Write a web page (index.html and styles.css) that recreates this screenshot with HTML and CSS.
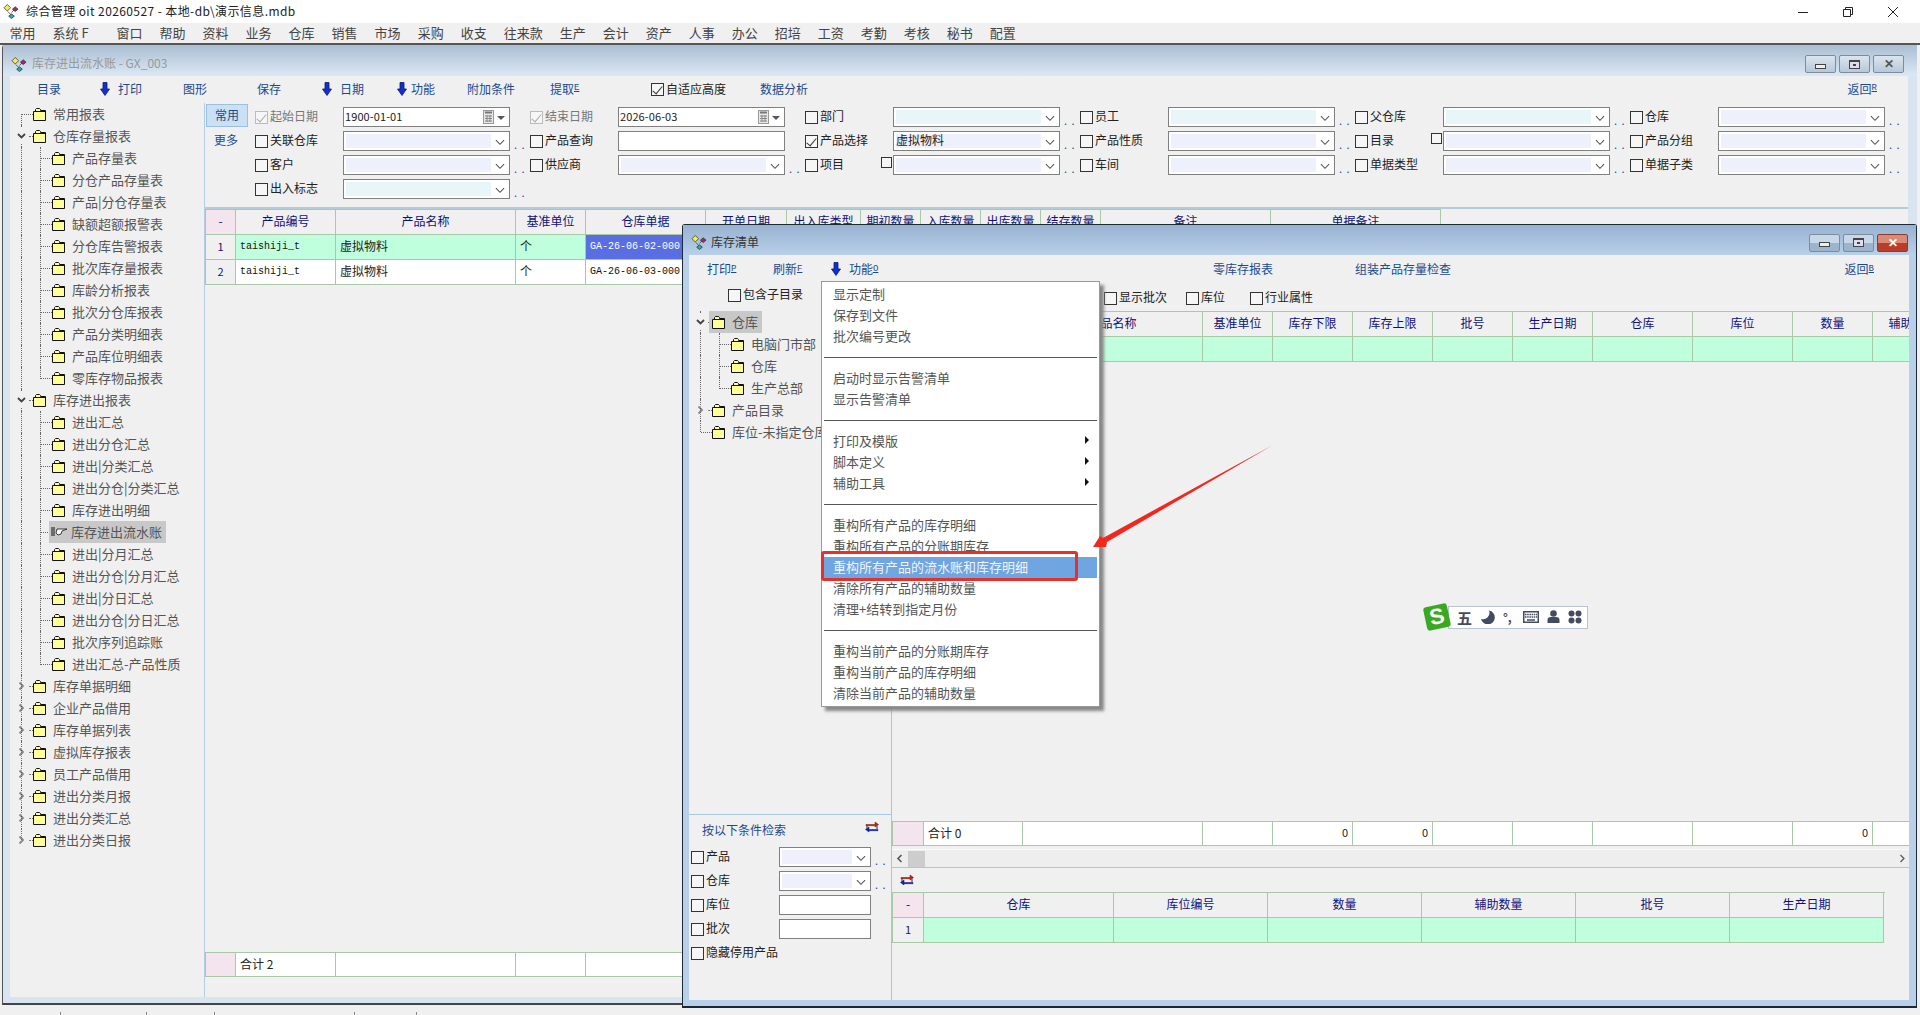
FILE: index.html
```html
<!DOCTYPE html>
<html lang="zh-CN">
<head>
    <meta charset="UTF-8">
    <title>综合管理 oit 20260527</title>
    <link rel="stylesheet" href="styles.css">
</head>
<body>
<svg class="defs" width="0" height="0">
    <symbol id="app" viewBox="0 0 18 16">
        <path d="M5 8L8 11V14M13 5L9 9" fill="none" stroke="#555" stroke-width="1"/>
        <path d="M4.500 0.500L8 4L4.500 7.500L1 4Z" fill="#f4ee50" stroke="#333" stroke-width="0.800"/>
        <path d="M13 3L16 5.500L13 8L10 5.500Z" fill="#a02a70" stroke="#333" stroke-width="0.800"/>
        <path d="M9 10.500L12 13L9 15.500L6 13Z" fill="#30a8a8" stroke="#333" stroke-width="0.800"/>
    </symbol>
    <symbol id="fd" viewBox="0 0 13 13">
        <path d="M0.500 3.500H2.500V1.500L3.500 0.500H6.500L7.500 1.500V2.500H12.500V12.500H0.500Z" fill="#ffff99" stroke="#111" stroke-width="1"/>
        <path d="M1 3.500H12" stroke="#111" stroke-width="1"/>
    </symbol>
    <symbol id="chev" viewBox="0 0 11 7">
        <path d="M1 1L5.500 5.500L10 1" fill="none" stroke="#555" stroke-width="1.200"/>
    </symbol>
    <symbol id="tog" viewBox="0 0 9 6">
        <path d="M1 1L4.500 4.500L8 1" fill="none" stroke="#444" stroke-width="1.800"/>
    </symbol>
    <symbol id="down" viewBox="0 0 10 14">
        <path d="M3 0.500H7V7H9.500L5 13.500L0.500 7H3Z" fill="#1030d0" stroke="#0a1a70" stroke-width="0.800"/>
    </symbol>
    <symbol id="swap" viewBox="0 0 14 12">
        <path d="M1 3.500H10V1L13.500 3.500L10 6V4.700H1Z" fill="#d02010" stroke="#701008" stroke-width="0.500"/>
        <path d="M13 8.500H4V6L0.500 8.500L4 11V9.700H13Z" fill="#1020c0" stroke="#081070" stroke-width="0.500"/>
        <path d="M2 4.500V8M12 4.500V8" stroke="#333" stroke-width="1"/>
    </symbol>
    <symbol id="cal" viewBox="0 0 12 15">
        <rect x="0.500" y="0.500" width="10" height="13" fill="#e8e8e8" stroke="#999"/>
        <path d="M2 2.500H9" stroke="#777" stroke-width="2"/>
        <path d="M2 6H9M2 8.500H9M2 11H9M4 5V12M7 5V12" stroke="#888" stroke-width="1"/>
    </symbol>
</svg>

<div class="app">
    <!-- caption -->
    <header class="caption">
        <svg class="ico-app"><use href="#app"/></svg>
        <span class="caption-text">综合管理 oit 20260527 - 本地-db\演示信息.mdb</span>
        <div class="caption-btns">
            <svg width="12" height="12" viewBox="0 0 12 12"><path d="M1 6.500H11" stroke="#222"/></svg>
            <svg width="12" height="12" viewBox="0 0 12 12"><path d="M1.500 3.500H8.500V10.500H1.500ZM3.500 3.500V1.500H10.500V8.500H8.500" fill="none" stroke="#222"/></svg>
            <svg width="12" height="12" viewBox="0 0 12 12"><path d="M1 1L11 11M11 1L1 11" stroke="#222"/></svg>
        </div>
    </header>

    <!-- main menu -->
    <nav class="menubar">
        <span>常用</span><span class="sys">系统 F</span><span>窗口</span><span>帮助</span><span>资料</span><span>业务</span><span>仓库</span><span>销售</span><span>市场</span><span>采购</span><span>收支</span><span>往来款</span><span>生产</span><span>会计</span><span>资产</span><span>人事</span><span>办公</span><span>招培</span><span>工资</span><span>考勤</span><span>考核</span><span>秘书</span><span>配置</span>
    </nav>

    <div class="desktop">
        <!-- 库存进出流水账 -->
        <section class="win win-back">
            <div class="win-title">
                <svg class="ico-app"><use href="#app"/></svg>
                <span>库存进出流水账 - GX_003</span>
                <div class="win-btns">
                    <button class="wb"><i class="g-min"></i></button>
                    <button class="wb"><i class="g-max"></i></button>
                    <button class="wb"><i class="g-x">✕</i></button>
                </div>
            </div>
            <div class="win-body">
                <div class="toolbar tb-back">
                    <a>目录</a>
                    <a><svg class="ico-down"><use href="#down"/></svg>打印</a>
                    <a>图形</a>
                    <a>保存</a>
                    <a><svg class="ico-down"><use href="#down"/></svg>日期</a>
                    <a><svg class="ico-down"><use href="#down"/></svg>功能</a>
                    <a>附加条件</a>
                    <a>提取<small>E</small></a>
                    <label class="ck"><i class="cb on"></i>自适应高度</label>
                    <a>数据分析</a>
                    <a class="tb-end">返回<small>R</small></a>
                </div>
                <div class="split">
                    <ul class="tree tree-back">
                        <li class="node n0 first plain"><svg class="fd"><use href="#fd"/></svg>常用报表</li>
                        <li class="node n0 open"><svg class="tog"><use href="#tog"/></svg><svg class="fd"><use href="#fd"/></svg>仓库存量报表</li>
                        <li class="node n1"><svg class="fd"><use href="#fd"/></svg>产品存量表</li>
                        <li class="node n1"><svg class="fd"><use href="#fd"/></svg>分仓产品存量表</li>
                        <li class="node n1"><svg class="fd"><use href="#fd"/></svg>产品|分仓存量表</li>
                        <li class="node n1"><svg class="fd"><use href="#fd"/></svg>缺额超额报警表</li>
                        <li class="node n1"><svg class="fd"><use href="#fd"/></svg>分仓库告警报表</li>
                        <li class="node n1"><svg class="fd"><use href="#fd"/></svg>批次库存量报表</li>
                        <li class="node n1"><svg class="fd"><use href="#fd"/></svg>库龄分析报表</li>
                        <li class="node n1"><svg class="fd"><use href="#fd"/></svg>批次分仓库报表</li>
                        <li class="node n1"><svg class="fd"><use href="#fd"/></svg>产品分类明细表</li>
                        <li class="node n1"><svg class="fd"><use href="#fd"/></svg>产品库位明细表</li>
                        <li class="node n1 last"><svg class="fd"><use href="#fd"/></svg>零库存物品报表</li>
                        <li class="node n0 open"><svg class="tog"><use href="#tog"/></svg><svg class="fd"><use href="#fd"/></svg>库存进出报表</li>
                        <li class="node n1"><svg class="fd"><use href="#fd"/></svg>进出汇总</li>
                        <li class="node n1"><svg class="fd"><use href="#fd"/></svg>进出分仓汇总</li>
                        <li class="node n1"><svg class="fd"><use href="#fd"/></svg>进出|分类汇总</li>
                        <li class="node n1"><svg class="fd"><use href="#fd"/></svg>进出分仓|分类汇总</li>
                        <li class="node n1"><svg class="fd"><use href="#fd"/></svg>库存进出明细</li>
                        <li class="node n1"><span class="sel"><svg class="hand" width="17" height="13" viewBox="0 0 17 13"><path d="M1 2V11M3 2V11" stroke="#111"/><path d="M6 4H16L11 6L10 9L7 10L5 8Z" fill="#fff" stroke="#111" stroke-width="0.800"/></svg>库存进出流水账</span></li>
                        <li class="node n1"><svg class="fd"><use href="#fd"/></svg>进出|分月汇总</li>
                        <li class="node n1"><svg class="fd"><use href="#fd"/></svg>进出分仓|分月汇总</li>
                        <li class="node n1"><svg class="fd"><use href="#fd"/></svg>进出|分日汇总</li>
                        <li class="node n1"><svg class="fd"><use href="#fd"/></svg>进出分仓|分日汇总</li>
                        <li class="node n1"><svg class="fd"><use href="#fd"/></svg>批次序列追踪账</li>
                        <li class="node n1 last"><svg class="fd"><use href="#fd"/></svg>进出汇总-产品性质</li>
                        <li class="node n0 closed"><svg class="tog"><use href="#tog"/></svg><svg class="fd"><use href="#fd"/></svg>库存单据明细</li>
                        <li class="node n0 closed"><svg class="tog"><use href="#tog"/></svg><svg class="fd"><use href="#fd"/></svg>企业产品借用</li>
                        <li class="node n0 closed"><svg class="tog"><use href="#tog"/></svg><svg class="fd"><use href="#fd"/></svg>库存单据列表</li>
                        <li class="node n0 closed"><svg class="tog"><use href="#tog"/></svg><svg class="fd"><use href="#fd"/></svg>虚拟库存报表</li>
                        <li class="node n0 closed"><svg class="tog"><use href="#tog"/></svg><svg class="fd"><use href="#fd"/></svg>员工产品借用</li>
                        <li class="node n0 closed"><svg class="tog"><use href="#tog"/></svg><svg class="fd"><use href="#fd"/></svg>进出分类月报</li>
                        <li class="node n0 closed"><svg class="tog"><use href="#tog"/></svg><svg class="fd"><use href="#fd"/></svg>进出分类汇总</li>
                        <li class="node n0 closed end"><svg class="tog"><use href="#tog"/></svg><svg class="fd"><use href="#fd"/></svg>进出分类日报</li>
                    </ul>

                    <div class="panel">
                        <div class="filters">
                            <div class="tabs">
                                <button class="tab">常用</button>
                                <a class="tab-more">更多</a>
                            </div>
                            <div class="form">
                                <!-- row 1 -->
                                <label class="ck off"><i class="cb on"></i>起始日期</label>
                                <div class="combo date">1900-01-01<svg class="ico-cal"><use href="#cal"/></svg><b class="tri"></b></div>
                                <span></span>
                                <label class="ck off"><i class="cb on"></i>结束日期</label>
                                <div class="combo date">2026-06-03<svg class="ico-cal"><use href="#cal"/></svg><b class="tri"></b></div>
                                <span></span>
                                <label class="ck"><i class="cb"></i>部门</label>
                                <div class="combo"><div class="fill cyan"></div><svg class="chev"><use href="#chev"/></svg></div>
                                <span class="dots">. .</span>
                                <label class="ck"><i class="cb"></i>员工</label>
                                <div class="combo"><div class="fill cyan"></div><svg class="chev"><use href="#chev"/></svg></div>
                                <span class="dots">. .</span>
                                <label class="ck"><i class="cb"></i>父仓库</label>
                                <div class="combo"><div class="fill cyan"></div><svg class="chev"><use href="#chev"/></svg></div>
                                <span class="dots">. .</span>
                                <label class="ck"><i class="cb"></i>仓库</label>
                                <div class="combo"><div class="fill"></div><svg class="chev"><use href="#chev"/></svg></div>
                                <span class="dots">. .</span>
                                <!-- row 2 -->
                                <label class="ck"><i class="cb"></i>关联仓库</label>
                                <div class="combo"><div class="fill"></div><svg class="chev"><use href="#chev"/></svg></div>
                                <span class="dots">. .</span>
                                <label class="ck"><i class="cb"></i>产品查询</label>
                                <div class="combo"></div>
                                <span></span>
                                <label class="ck"><i class="cb on"></i>产品选择</label>
                                <div class="combo"><div class="fill">虚拟物料</div><svg class="chev"><use href="#chev"/></svg></div>
                                <span class="dots">. .</span>
                                <label class="ck"><i class="cb"></i>产品性质</label>
                                <div class="combo"><div class="fill"></div><svg class="chev"><use href="#chev"/></svg></div>
                                <span class="dots">. .</span>
                                <label class="ck split-ck"><i class="cb"></i>目录<i class="cb small"></i></label>
                                <div class="combo"><div class="fill"></div><svg class="chev"><use href="#chev"/></svg></div>
                                <span class="dots">. .</span>
                                <label class="ck"><i class="cb"></i>产品分组</label>
                                <div class="combo"><div class="fill"></div><svg class="chev"><use href="#chev"/></svg></div>
                                <span class="dots">. .</span>
                                <!-- row 3 -->
                                <label class="ck"><i class="cb"></i>客户</label>
                                <div class="combo"><div class="fill"></div><svg class="chev"><use href="#chev"/></svg></div>
                                <span class="dots">. .</span>
                                <label class="ck"><i class="cb"></i>供应商</label>
                                <div class="combo"><div class="fill"></div><svg class="chev"><use href="#chev"/></svg></div>
                                <span class="dots">. .</span>
                                <label class="ck split-ck"><i class="cb"></i>项目<i class="cb small"></i></label>
                                <div class="combo"><div class="fill"></div><svg class="chev"><use href="#chev"/></svg></div>
                                <span class="dots">. .</span>
                                <label class="ck"><i class="cb"></i>车间</label>
                                <div class="combo"><div class="fill"></div><svg class="chev"><use href="#chev"/></svg></div>
                                <span class="dots">. .</span>
                                <label class="ck"><i class="cb"></i>单据类型</label>
                                <div class="combo"><div class="fill"></div><svg class="chev"><use href="#chev"/></svg></div>
                                <span class="dots">. .</span>
                                <label class="ck"><i class="cb"></i>单据子类</label>
                                <div class="combo"><div class="fill"></div><svg class="chev"><use href="#chev"/></svg></div>
                                <span class="dots">. .</span>
                                <!-- row 4 -->
                                <label class="ck"><i class="cb"></i>出入标志</label>
                                <div class="combo"><div class="fill cyan"></div><svg class="chev"><use href="#chev"/></svg></div>
                                <span class="dots">. .</span>
                            </div>
                        </div>

                        <div class="gd gd-flow">
                            <div class="c hd pink">-</div><div class="c hd">产品编号</div><div class="c hd">产品名称</div><div class="c hd">基准单位</div><div class="c hd">仓库单据</div><div class="c hd">开单日期</div><div class="c hd">出入库类型</div><div class="c hd">期初数量</div><div class="c hd">入库数量</div><div class="c hd">出库数量</div><div class="c hd">结存数量</div><div class="c hd">备注</div><div class="c hd">单据备注</div>
                            <div class="c no">1</div><div class="c g mono">taishiji_t</div><div class="c g">虚拟物料</div><div class="c g">个</div><div class="c cur mono">GA-26-06-02-000</div><div class="c g"></div><div class="c g"></div><div class="c g"></div><div class="c g"></div><div class="c g"></div><div class="c g"></div><div class="c g"></div><div class="c g"></div>
                            <div class="c no">2</div><div class="c w mono">taishiji_t</div><div class="c w">虚拟物料</div><div class="c w">个</div><div class="c w mono">GA-26-06-03-000</div><div class="c w"></div><div class="c w"></div><div class="c w"></div><div class="c w"></div><div class="c w"></div><div class="c w"></div><div class="c w"></div><div class="c w"></div>
                        </div>
                        <div class="gd gd-flow gd-foot">
                            <div class="c pink"></div><div class="c w">合计 2</div><div class="c w"></div><div class="c w"></div><div class="c w"></div><div class="c w"></div><div class="c w"></div><div class="c w"></div><div class="c w"></div><div class="c w"></div><div class="c w"></div><div class="c w"></div><div class="c w"></div>
                        </div>
                    </div>
                </div>
            </div>
        </section>

        <!-- 库存清单 -->
        <section class="win win-front">
            <div class="win-title">
                <svg class="ico-app"><use href="#app"/></svg>
                <span>库存清单</span>
                <div class="win-btns">
                    <button class="wb"><i class="g-min"></i></button>
                    <button class="wb"><i class="g-max"></i></button>
                    <button class="wb close"><i class="g-x">✕</i></button>
                </div>
            </div>
            <div class="win-body">
                <div class="toolbar tb-front">
                    <a>打印<small>P</small></a>
                    <a>刷新<small>F</small></a>
                    <a><svg class="ico-down"><use href="#down"/></svg>功能<small>O</small></a>
                    <a>零库存报表</a>
                    <a>组装产品存量检查</a>
                    <a class="tb-end">返回<small>B</small></a>
                </div>
                <div class="split">
                    <div class="side">
                        <div class="side-top">
                            <label class="ck sub-ck"><i class="cb"></i>包含子目录</label>
                            <ul class="tree tree-front">
                                <li class="node n0 open"><svg class="tog"><use href="#tog"/></svg><span class="sel"><svg class="fd"><use href="#fd"/></svg>仓库</span></li>
                                <li class="node n1"><svg class="fd"><use href="#fd"/></svg>电脑门市部</li>
                                <li class="node n1"><svg class="fd"><use href="#fd"/></svg>仓库</li>
                                <li class="node n1 last"><svg class="fd"><use href="#fd"/></svg>生产总部</li>
                                <li class="node n0 closed"><svg class="tog"><use href="#tog"/></svg><svg class="fd"><use href="#fd"/></svg>产品目录</li>
                                <li class="node n0 end plain"><svg class="fd"><use href="#fd"/></svg>库位-未指定仓库</li>
                            </ul>
                        </div>
                        <div class="search">
                            <div class="search-head"><a>按以下条件检索</a><svg class="ico-swap"><use href="#swap"/></svg></div>
                            <div class="search-form">
                                <label class="ck"><i class="cb"></i>产品</label>
                                <div class="combo"><div class="fill"></div><svg class="chev"><use href="#chev"/></svg></div>
                                <span class="dots">. .</span>
                                <label class="ck"><i class="cb"></i>仓库</label>
                                <div class="combo"><div class="fill"></div><svg class="chev"><use href="#chev"/></svg></div>
                                <span class="dots">. .</span>
                                <label class="ck"><i class="cb"></i>库位</label>
                                <div class="combo"></div>
                                <span></span>
                                <label class="ck"><i class="cb"></i>批次</label>
                                <div class="combo"></div>
                                <span></span>
                                <label class="ck wide"><i class="cb"></i>隐藏停用产品</label>
                            </div>
                        </div>
                    </div>
                    <div class="list">
                        <div class="list-opts">
                            <label class="ck o1"><i class="cb"></i>显示批次</label>
                            <label class="ck o2"><i class="cb"></i>库位</label>
                            <label class="ck"><i class="cb"></i>行业属性</label>
                        </div>
                        <div class="gd gd-stock">
                            <div class="c hd pink"></div><div class="c hd"></div><div class="c hd">产品名称</div><div class="c hd">基准单位</div><div class="c hd">库存下限</div><div class="c hd">库存上限</div><div class="c hd">批号</div><div class="c hd">生产日期</div><div class="c hd">仓库</div><div class="c hd">库位</div><div class="c hd">数量</div><div class="c hd">辅助数量</div>
                            <div class="c no"></div><div class="c g"></div><div class="c g"></div><div class="c g"></div><div class="c g"></div><div class="c g"></div><div class="c g"></div><div class="c g"></div><div class="c g"></div><div class="c g"></div><div class="c g"></div><div class="c g"></div>
                        </div>
                        <div class="gd gd-stock gd-foot">
                            <div class="c pink"></div><div class="c w">合计 0</div><div class="c w"></div><div class="c w"></div><div class="c w num">0</div><div class="c w num">0</div><div class="c w"></div><div class="c w"></div><div class="c w"></div><div class="c w"></div><div class="c w num">0</div><div class="c w"></div>
                        </div>
                        <div class="hscroll">
                            <svg class="sb-l" width="7" height="9" viewBox="0 0 7 9"><path d="M5.500 1L2 4.500L5.500 8" fill="none" stroke="#555" stroke-width="1.600"/></svg>
                            <div class="sb-thumb"></div>
                            <svg class="sb-r" width="7" height="9" viewBox="0 0 7 9"><path d="M1.500 1L5 4.500L1.500 8" fill="none" stroke="#555" stroke-width="1.200"/></svg>
                        </div>
                        <div class="swap-row"><svg class="ico-swap"><use href="#swap"/></svg></div>
                        <div class="gd gd-loc">
                            <div class="c hd pink">-</div><div class="c hd">仓库</div><div class="c hd">库位编号</div><div class="c hd">数量</div><div class="c hd">辅助数量</div><div class="c hd">批号</div><div class="c hd">生产日期</div>
                            <div class="c no">1</div><div class="c g"></div><div class="c g"></div><div class="c g"></div><div class="c g"></div><div class="c g"></div><div class="c g"></div>
                        </div>
                    </div>
                </div>
            </div>
        </section>

        <!-- 功能 popup -->
        <div class="popup">
            <div class="mi">显示定制</div>
            <div class="mi">保存到文件</div>
            <div class="mi">批次编号更改</div>
            <div class="sep"></div>
            <div class="mi">启动时显示告警清单</div>
            <div class="mi">显示告警清单</div>
            <div class="sep"></div>
            <div class="mi sub">打印及模版</div>
            <div class="mi sub">脚本定义</div>
            <div class="mi sub">辅助工具</div>
            <div class="sep"></div>
            <div class="mi">重构所有产品的库存明细</div>
            <div class="mi">重构所有产品的分账期库存</div>
            <div class="mi hot">重构所有产品的流水账和库存明细</div>
            <div class="mi">清除所有产品的辅助数量</div>
            <div class="mi">清理+结转到指定月份</div>
            <div class="sep"></div>
            <div class="mi">重构当前产品的分账期库存</div>
            <div class="mi">重构当前产品的库存明细</div>
            <div class="mi">清除当前产品的辅助数量</div>
        </div>

        <!-- annotation drawn on the screenshot -->
        <div class="redbox"></div>
        <svg class="redarrow" width="195" height="125" viewBox="0 0 195 125">
            <polygon points="8,117 15,106 18,108 188,15 22,112 21,117" fill="#f0281e"/>
        </svg>

        <!-- IME bar -->
        <div class="ime">
            <span class="ime-logo">S</span>
            <div class="ime-bar">
                <span class="ime-wu">五</span>
                <svg width="15" height="14" viewBox="0 0 15 14"><path d="M9 0.500A7 7 0 1 1 1 9A6.500 6.500 0 0 0 9 0.500Z" fill="#444a60"/></svg>
                <span class="ime-punc">°,</span>
                <svg width="16" height="12" viewBox="0 0 16 12"><rect x="0.750" y="0.750" width="14.500" height="10.500" fill="#fff" stroke="#444a60" stroke-width="1.500"/><path d="M2 3.500H14M2 6H14" stroke="#444a60" stroke-width="1.500" stroke-dasharray="1.500 0.700"/><path d="M4 9H12" stroke="#444a60" stroke-width="1.500"/></svg>
                <svg width="13" height="14" viewBox="0 0 13 14"><circle cx="6.500" cy="3.500" r="3.300" fill="#444a60"/><path d="M0.500 13V10Q0.500 7 4 7H9Q12.500 7 12.500 10V13Z" fill="#444a60"/></svg>
                <svg width="14" height="14" viewBox="0 0 14 14" fill="#444a60"><circle cx="3.500" cy="3.500" r="3"/><circle cx="10.500" cy="3.500" r="3"/><circle cx="3.500" cy="10.500" r="3"/><circle cx="10.500" cy="10.500" r="3"/></svg>
            </div>
        </div>
    </div>

    <footer class="status">
        <span class="s1"></span><span class="s2"></span><span class="s3"></span><span class="s4"></span><span class="s5"></span>
    </footer>
</div>
</body>
</html>
```

FILE: styles.css
```css
* {
    box-sizing: border-box;
}
html, body {
    margin: 0;
    padding: 0;
}
body {
    font-family: "Noto Sans CJK SC", "Liberation Sans", sans-serif;
    font-size: 13px;
    line-height: 1;
    color: #222;
    background-color: #f0f0f0;
    overflow: hidden;
}
.defs {
    position: absolute;
}
.app {
    display: flex;
    flex-direction: column;
    width: 1920px;
    height: 1015px;
    overflow: hidden;
}

/* caption + menu */
.caption {
    display: flex;
    align-items: center;
    flex: 0 0 23px;
    padding-left: 3px;
    background-color: #fff;
}
.ico-app {
    width: 17px;
    height: 15px;
    flex: none;
}
.caption-text {
    margin: 0 0 2px 6px;
    font-size: 12px;
    letter-spacing: 0.400px;
    color: #222;
}
.caption-btns {
    display: flex;
    gap: 33px;
    margin-left: auto;
    margin-right: 21px;
}
.menubar {
    display: flex;
    align-items: center;
    flex: 0 0 20px;
    padding: 0 0 2px 1px;
    color: #444;
    background-color: #f0f0f0;
}
.menubar span {
    padding: 0 8.5px;
    white-space: nowrap;
}
.menubar .sys {
    width: 64px;
}

/* windows */
.desktop {
    position: relative;
    flex: 0 0 962px;
    border-top: 2px solid #555;
}
.win {
    position: absolute;
    display: flex;
    flex-direction: column;
}
.win-back {
    left: 2px;
    top: 0;
    width: 1915px;
    height: 960px;
    padding: 0 9px 6px 7px;
    background-color: #d8e4f0;
    border-left: 1px solid #555;
    border-bottom: 2px solid #444;
    border-radius: 3px 3px 0 0;
}
.win-front {
    left: 682px;
    top: 179px;
    width: 1235px;
    height: 784px;
    padding: 0 7px 6px 6px;
    background-color: #b8d0e8;
    border: 1px solid #1c2a38;
    border-bottom-width: 2px;
    border-radius: 3px 3px 0 0;
}
.win-title {
    display: flex;
    align-items: center;
    flex: 0 0 31px;
    margin: 0 -9px 0 -7px;
    padding: 7px 13px 0 8px;
    font-size: 12px;
    color: #999;
    background: linear-gradient(#aabed2, #dce8f4);
}
.win-back .win-title span {
    margin: 0 0 2px 4px;
}
.win-front .win-title {
    flex-basis: 30px;
    margin: 0 -7px 0 -6px;
    padding: 5px 8px 0 8px;
    color: #333;
    background: linear-gradient(#98b2d0, #b8d0e8);
}
.win-front .win-title span {
    margin: 0 0 2px 3px;
}
.win-btns {
    display: flex;
    gap: 3px;
    margin-left: auto;
}
.wb {
    display: flex;
    align-items: center;
    justify-content: center;
    width: 31px;
    height: 18px;
    padding: 0;
    border: 1px solid #7d8c9c;
    border-radius: 2px;
    background: linear-gradient(#dbe5ef, #b8c8d8);
}
.win-front .wb {
    background: linear-gradient(#c8d8e8 50%, #9cb4cc 50%);
}
.win-front .wb.close {
    border-color: #8a3a30;
    background: linear-gradient(#dc8a78 50%, #bc3c2c 50%);
}
.g-min {
    width: 11px;
    height: 5px;
    margin-top: 4px;
    border: 1px solid #444;
    background-color: #eee;
}
.g-max {
    width: 11px;
    height: 9px;
    border: 1px solid #444;
    border-top-width: 2px;
    background: linear-gradient(#444, #444) center / 3px 2px no-repeat, #dde;
}
.g-x {
    font-style: normal;
    font-size: 12px;
    font-weight: bold;
    color: #555;
}
.close .g-x {
    color: #fff;
}
.win-body {
    display: flex;
    flex-direction: column;
    flex: 1;
    min-height: 0;
    background-color: #f0f0f0;
}

/* toolbars */
.toolbar {
    display: grid;
    align-items: center;
    flex: none;
    height: 27px;
    padding-bottom: 2px;
    font-size: 12px;
    color: #1a4a90;
}
.toolbar a {
    display: flex;
    align-items: center;
    white-space: nowrap;
}
.toolbar small {
    font-family: "Liberation Mono", monospace;
    font-size: 9px;
    text-decoration: underline;
}
.ico-down {
    width: 10px;
    height: 14px;
    margin-right: 8px;
}
.tb-back {
    grid-template-columns: 63px 83px 74px 65px 75px 70px 83px 101px 109px 1fr auto;
    padding: 0 31px 2px 27px;
}
.tb-back a:nth-child(6) .ico-down {
    margin-right: 4px;
}
.tb-front {
    grid-template-columns: 66px 58px 382px 142px 1fr auto;
    height: 30px;
    padding: 0 35px 2px 18px;
}
.tb-end {
    justify-self: end;
}

/* checkboxes */
.ck {
    display: flex;
    align-items: center;
    font-size: 12px;
    color: #222;
    white-space: nowrap;
}
.ck.off {
    color: #777;
}
.cb {
    position: relative;
    top: 1px;
    flex: none;
    width: 13px;
    height: 13px;
    margin-right: 2px;
    border: 1px solid #333;
    background-color: #f6f6f6;
}
.form .ck, .search-form .ck, .list-opts .ck, .sub-ck {
    padding-bottom: 2px;
}
.cb.on::after {
    content: "";
    position: absolute;
    left: 3px;
    top: 0;
    width: 4px;
    height: 9px;
    border: solid #333;
    border-width: 0 1.500px 1.500px 0;
    transform: rotate(40deg);
}
.off .cb {
    border-color: #bbb;
}
.off .cb.on::after {
    border-color: #aaa;
}
.split-ck {
    position: relative;
}
.cb.small {
    position: absolute;
    right: 1px;
    top: 2px;
    width: 11px;
    height: 11px;
    margin: 0;
}

/* tree */
.split {
    display: flex;
    flex: 1;
    min-height: 0;
}
.tree {
    margin: 0;
    padding: 0;
    list-style: none;
    color: #555;
}
.tree-back {
    flex: 0 0 194px;
    overflow: hidden;
}
.node {
    position: relative;
    display: flex;
    align-items: center;
    height: 22px;
    padding-bottom: 2px;
    white-space: nowrap;
}
.node::before {
    content: "";
    position: absolute;
    top: 0;
    bottom: 0;
    left: 11px;
    border-left: 1px dotted #666;
}
.node.first::before {
    top: 11px;
}
.node.end::before {
    bottom: 11px;
}
.n0::after {
    content: "";
    position: absolute;
    left: 19px;
    top: 11px;
    width: 4px;
    border-top: 1px dotted #666;
}
.n0.plain::after {
    left: 12px;
    width: 11px;
}
.n0 {
    padding-left: 23px;
}
.n1 {
    padding-left: 42px;
}
.n1::after {
    content: "";
    position: absolute;
    left: 30px;
    top: 0;
    bottom: 0;
    border-left: 1px dotted #666;
    width: 12px;
    background: repeating-linear-gradient(90deg, #666 0 1px, transparent 1px 2px) 0 11px / 12px 1px no-repeat;
}
.n1.last::after {
    bottom: 10px;
}
.fd {
    position: relative;
    top: 1px;
    z-index: 1;
    flex: none;
    width: 13px;
    height: 13px;
    margin-right: 7px;
}
.tog {
    position: absolute;
    left: 7px;
    top: 3px;
    width: 9px;
    height: 16px;
    padding: 5px 0;
    z-index: 1;
    background-color: #f0f0f0;
}
.closed .tog {
    transform: rotate(-90deg);
    opacity: 0.600;
}
.sel {
    position: relative;
    z-index: 1;
    display: flex;
    align-items: center;
    height: 22px;
    margin: 0 0 -2px -3px;
    padding: 0 4px 2px 3px;
    background-color: #c8c8c8;
}
.hand {
    flex: none;
    margin-right: 3px;
    margin-left: -1px;
}

/* filter form */
.panel {
    display: flex;
    flex-direction: column;
    flex: 1;
    min-width: 0;
    overflow: hidden;
    border-left: 1px solid #b4cce4;
}
.filters {
    display: flex;
    flex: 0 0 106px;
    border-bottom: 2px solid #b4ccd8;
}
.tabs {
    flex: 0 0 50px;
    padding: 1px 0 0 1px;
}
.tab {
    display: block;
    width: 42px;
    height: 23px;
    padding: 0 0 2px;
    font: inherit;
    font-size: 12px;
    color: #1a4a90;
    border: 1px solid #9cc0e4;
    background-color: #cce0f4;
}
.tab-more {
    display: block;
    margin: 7px 0 0 8px;
    font-size: 12px;
    color: #1a4a90;
}
.form {
    display: grid;
    grid-template-columns: repeat(6, 88px 167px 20px);
    grid-auto-rows: 20px;
    row-gap: 4px;
    padding-top: 4px;
}
.combo {
    position: relative;
    display: flex;
    align-items: center;
    padding: 2px;
    border: 1px solid #808080;
    background-color: #fff;
    color: #222;
}
.fill {
    display: flex;
    align-items: center;
    height: 14px;
    flex: 1;
    margin-right: 16px;
    padding-bottom: 2px;
    font-size: 12px;
    background-color: #eef0fb;
}
.fill.cyan {
    background-color: #e8f6fa;
}
.chev {
    position: absolute;
    right: 4px;
    top: 7px;
    width: 10px;
    height: 7px;
}
.date {
    padding: 0 0 2px 1px;
    font-size: 11px;
    letter-spacing: 0.100px;
}
.ico-cal {
    position: absolute;
    right: 14px;
    top: 2px;
    width: 12px;
    height: 15px;
}
.tri {
    position: absolute;
    right: 4px;
    top: 8px;
    border: 4px solid transparent;
    border-top: 4px solid #556;
    border-bottom: 0;
}
.dots {
    padding: 8px 0 0 4px;
    font-size: 11px;
    color: #1a4a90;
    letter-spacing: 1px;
}

/* data grids */
.gd {
    display: grid;
    flex: none;
    grid-auto-rows: 25px;
    border-top: 1px solid #a8c8a8;
    border-left: 1px solid #a8c8a8;
}
.gd-flow {
    width: 1236px;
    grid-template-columns: 30px 100px 180px 70px 120px 81px 74px 60px 60px 60px 60px 170px 170px;
}
.gd-foot {
    margin-top: auto;
    grid-auto-rows: 24px;
}
.panel .gd-foot {
    margin-bottom: 20px;
}
.c {
    display: flex;
    align-items: center;
    min-width: 0;
    padding: 0 4px 2px;
    overflow: hidden;
    font-size: 12px;
    white-space: nowrap;
    border-right: 1px solid #a8c8a8;
    border-bottom: 1px solid #a8c8a8;
}
.hd {
    justify-content: center;
    color: #10107c;
    background-color: #f0f0f0;
}
.pink {
    justify-content: center;
    background-color: #f4e4ee;
}
.no {
    justify-content: center;
    font-size: 11px;
    color: #10107c;
    background-color: #f0f0f0;
}
.g {
    background-color: #bfffdd;
}
.w {
    background-color: #fff;
}
.mono {
    padding-bottom: 0;
    font-family: "Liberation Mono", monospace;
    font-size: 10px;
    color: #111;
}
.cur {
    color: #fff;
    background-color: #5a6ee4;
}
.num {
    justify-content: flex-end;
    font-size: 11px;
}

/* stock window */
.side {
    display: flex;
    flex-direction: column;
    flex: 0 0 202px;
    border-right: 1px solid #a8c4e0;
}
.side-top {
    flex: 1;
    min-height: 0;
    overflow: hidden;
}
.sub-ck {
    height: 20px;
    margin-bottom: 6px;
    padding-left: 39px;
}
.search {
    flex: 0 0 186px;
    border-top: 1px solid #a8c8e0;
}
.search-head {
    display: flex;
    align-items: center;
    justify-content: space-between;
    height: 32px;
    padding: 0 12px 2px 13px;
    font-size: 12px;
    color: #1a4a90;
}
.ico-swap {
    width: 14px;
    height: 12px;
}
.search-head .ico-swap {
    margin-top: -6px;
}
.search-form {
    display: grid;
    grid-template-columns: 88px 92px 20px;
    grid-auto-rows: 20px;
    row-gap: 4px;
    padding-left: 2px;
}
.wide {
    grid-column: 1 / -1;
}
.list {
    display: flex;
    flex-direction: column;
    flex: 1;
    min-width: 0;
    overflow: hidden;
}
.list-opts {
    display: flex;
    flex: 0 0 26px;
    align-items: center;
    padding: 0 0 0 212px;
}
.list-opts .o1 {
    width: 82px;
}
.list-opts .o2 {
    width: 64px;
}
.gd-stock {
    width: 1200px;
    grid-template-columns: 31px 99px 180px 70px 80px 80px 80px 80px 100px 100px 80px 80px;
}
.hscroll {
    display: flex;
    align-items: center;
    flex: 0 0 18px;
    margin-top: 3px;
    background-color: #eee;
    border-top: 1px solid #fafafa;
}
.sb-l {
    margin: 0 5px 0 4px;
}
.sb-thumb {
    width: 17px;
    height: 16px;
    background-color: #cdcdcd;
}
.sb-r {
    margin-left: auto;
    margin-right: 3px;
}
.swap-row {
    display: flex;
    align-items: center;
    flex: 0 0 25px;
    padding-left: 8px;
    border-top: 1px solid #a8c8e0;
}
.gd-loc {
    width: 993px;
    margin-bottom: 57px;
    grid-template-columns: 31px 190px 154px 154px 154px 154px 154px;
}

/* popup menu */
.popup {
    position: absolute;
    left: 821px;
    top: 236px;
    width: 279px;
    padding: 2px;
    color: #555;
    background-color: #fff;
    border: 1px solid #999;
    box-shadow: 4px 4px 3px #888;
}
.mi {
    position: relative;
    display: flex;
    align-items: center;
    height: 21px;
    padding: 0 0 2px 9px;
}
.mi.sub::after {
    content: "";
    position: absolute;
    right: 8px;
    top: 5px;
    border: 4px solid transparent;
    border-left: 4px solid #111;
    border-right: 0;
}
.mi.hot {
    color: #f0f4fa;
    background-color: #6fa5e0;
}
.sep {
    height: 21px;
    background: linear-gradient(#555, #555) 0 10px / 100% 1px no-repeat;
}
.redbox {
    position: absolute;
    left: 821px;
    top: 506px;
    width: 257px;
    height: 30px;
    border: 3px solid #e8302a;
    border-radius: 3px;
}
.redarrow {
    position: absolute;
    left: 1085px;
    top: 385px;
}

/* IME bar */
.ime {
    position: absolute;
    left: 1425px;
    top: 560px;
    display: flex;
    align-items: center;
}
.ime-logo {
    position: relative;
    z-index: 1;
    flex: none;
    width: 24px;
    height: 24px;
    font: bold 22px/24px "Liberation Sans", sans-serif;
    text-align: center;
    color: #fff;
    background-color: #3aa922;
    border-radius: 3px;
    transform: rotate(-12deg);
}
.ime-bar {
    display: flex;
    align-items: center;
    gap: 8px;
    width: 140px;
    height: 23px;
    margin-left: -1px;
    padding-left: 8px;
    color: #444a60;
    background-color: #fff;
    border: 1px solid #b8c4d4;
}
.ime-wu {
    font-size: 15px;
    font-weight: bold;
}
.ime-punc {
    width: 12px;
    font-size: 12px;
    font-weight: bold;
}

/* status strip */
.status {
    display: flex;
    align-items: flex-end;
    flex: 0 0 10px;
    background-color: #f0f0f0;
}
.status span {
    height: 3px;
    border-right: 1px solid #888;
}
.s1 { width: 61px; }
.s2 { width: 86px; }
.s3 { width: 68px; }
.s4 { width: 140px; }
.s5 { width: 62px; }
```
